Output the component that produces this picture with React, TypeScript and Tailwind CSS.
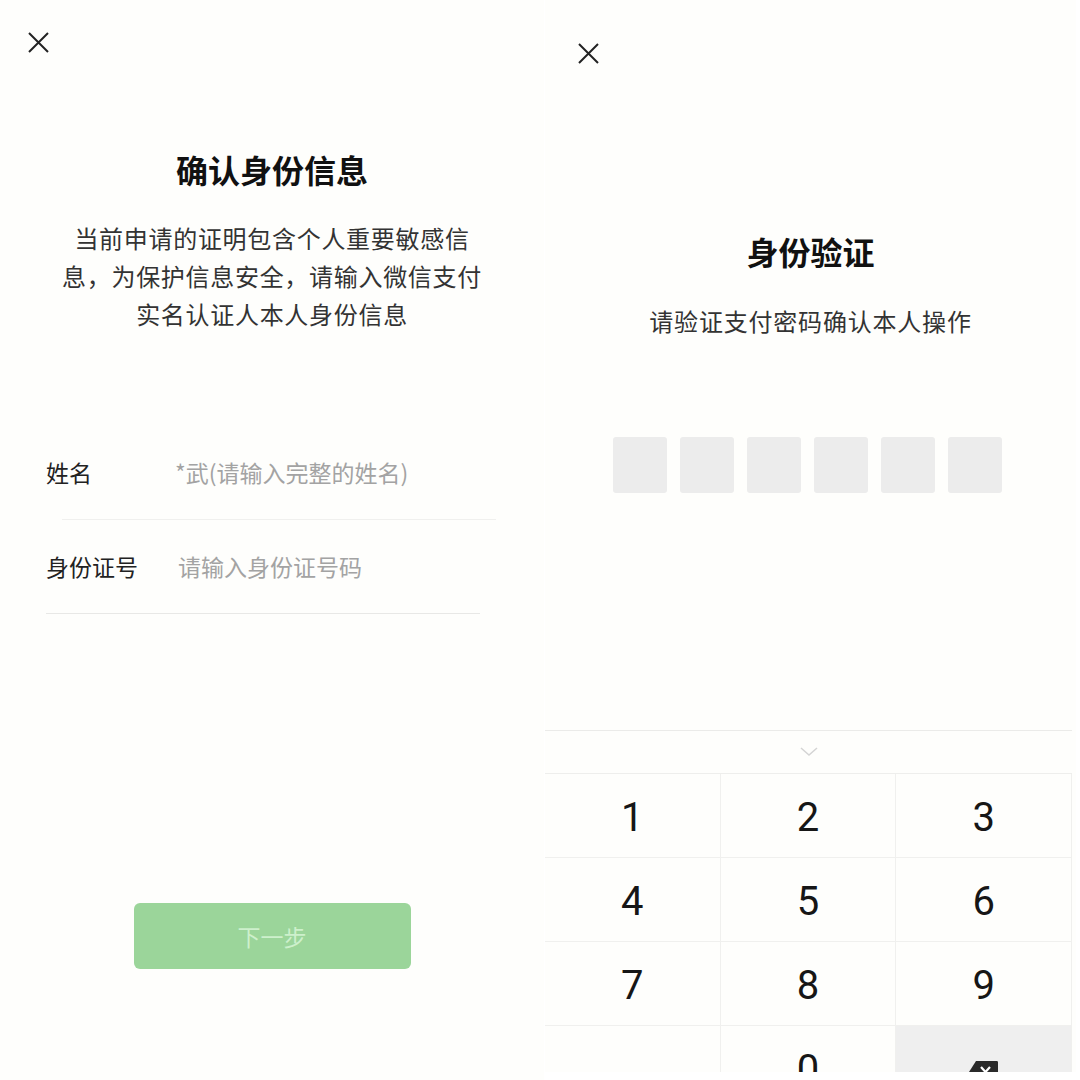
import React from "react";

const cjk = { fontFamily: '"Noto Sans CJK SC", "Noto Sans", sans-serif' };

function CloseIcon() {
  return (
    <svg width="21" height="21" viewBox="0 0 21 21" fill="none">
      <path d="M1 1L20 20M20 1L1 20" stroke="#222" strokeWidth="2" />
    </svg>
  );
}

function ConfirmPanel() {
  return (
    <div className="flex h-[1080px] w-[544px] flex-col bg-[#fefefc]" style={cjk}>
      <div className="pl-[28px] pt-[32px]">
        <CloseIcon />
      </div>
      <h1 className="mt-[96px] text-center text-[32px] font-bold leading-[40px] text-[#111]">
        确认身份信息
      </h1>
      <p className="mt-[30px] text-center text-[24px] leading-[38px] tracking-[0.7px] text-[#333]">
        当前申请的证明包含个人重要敏感信
        <br />
        息，为保护信息安全，请输入微信支付
        <br />
        实名认证人本人身份信息
      </p>
      <div className="mt-[92px] flex flex-col">
        <div className="flex h-[94px] items-center pl-[46px]">
          <span className="w-[129px] text-[23px] text-[#222]">姓名</span>
          <span className="text-[23px] text-[#a3a3a3]">*武(请输入完整的姓名)</span>
        </div>
        <div className="ml-[62px] w-[434px] border-t border-[#f0f0ee]" />
        <div className="flex h-[93px] items-center pl-[46px]">
          <span className="w-[132px] text-[23px] text-[#222]">身份证号</span>
          <span className="text-[23px] text-[#a3a3a3]">请输入身份证号码</span>
        </div>
        <div className="ml-[46px] w-[434px] border-t border-[#e8e8e6]" />
      </div>
      <div className="mt-[289px] flex justify-center">
        <button className="flex h-[66px] w-[277px] items-center justify-center rounded-[6px] bg-[#9bd59a] text-[23px] text-[#cdf0cc]">
          下一步
        </button>
      </div>
    </div>
  );
}

function BackspaceIcon() {
  return (
    <svg width="31" height="24" viewBox="0 0 31 24">
      <path d="M8 1H29C30 1 30 2 30 3V21C30 22 30 23 29 23H8L1 12Z" fill="#2a2a2a" />
      <path d="M13 7L22 17M22 7L13 17" stroke="#fff" strokeWidth="2.2" />
    </svg>
  );
}

function Key({ label, shaded, children }: { label?: string; shaded?: boolean; children?: React.ReactNode }) {
  return (
    <div
      className={`flex h-[84px] items-center justify-center border-b border-r border-[#f0f0ee] pt-[5px] text-[40px] text-[#161616] ${
        shaded ? "bg-[#efefef]" : ""
      }`}
      style={{ fontFamily: "Roboto, sans-serif" }}
    >
      {label}
      {children}
    </div>
  );
}

function VerifyPanel() {
  const keys = ["1", "2", "3", "4", "5", "6", "7", "8", "9"];
  return (
    <div className="flex h-[1072px] w-[531px] flex-col overflow-hidden bg-[#fefefc]" style={cjk}>
      <div className="pl-[33px] pt-[43px]">
        <CloseIcon />
      </div>
      <h1 className="mt-[167px] text-center text-[32px] font-bold leading-[40px] text-[#111]">
        身份验证
      </h1>
      <p className="mt-[33px] text-center text-[24px] leading-[34px] tracking-[0.8px] text-[#333]">
        请验证支付密码确认本人操作
      </p>
      <div className="mt-[99px] flex justify-center gap-[13px] pr-[6px]">
        {[0, 1, 2, 3, 4, 5].map((i) => (
          <div key={i} className="h-[56px] w-[54px] rounded-[3px] bg-[#ececec]" />
        ))}
      </div>
      <div className="mt-[237px] w-[527px] border-t border-[#ebebe9]">
        <div className="flex h-[43px] items-center justify-center border-b border-[#eeeeec]">
          <svg width="18" height="10" viewBox="0 0 18 10" fill="none">
            <path d="M1 1L9 8L17 1" stroke="#d4d4d4" strokeWidth="1.5" />
          </svg>
        </div>
        <div className="grid grid-cols-3">
          {keys.map((k) => (
            <Key key={k} label={k} />
          ))}
          <Key />
          <Key label="0" />
          <Key shaded>
            <div className="pt-[4px]">
              <BackspaceIcon />
            </div>
          </Key>
        </div>
      </div>
    </div>
  );
}

export default function App() {
  return (
    <div className="flex h-[1080px] w-[1080px] gap-[1px] overflow-hidden bg-white">
      <ConfirmPanel />
      <VerifyPanel />
    </div>
  );
}
